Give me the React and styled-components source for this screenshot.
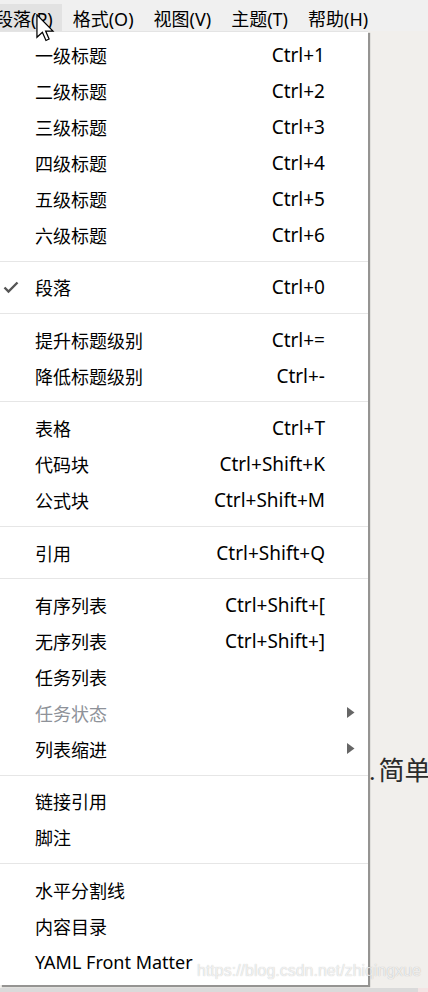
import React from 'react';
import styled, { createGlobalStyle } from 'styled-components';

const GlobalStyle = createGlobalStyle`
  html, body {
    margin: 0;
    padding: 0;
    background: #f1efec;
    overflow: hidden;
  }
  body {
    font-family: "Noto Sans", "Noto Sans CJK SC", sans-serif;
    color: #000;
  }
`;

const Page = styled.div`
  position: relative;
  width: 428px;
  height: 992px;
  overflow: hidden;
  display: flex;
  flex-direction: column;
`;

const MenuBar = styled.div`
  height: 31px;
  flex-shrink: 0;
  display: flex;
  align-items: stretch;
  background: #f0f0f0;
  margin-left: -14px;
  padding-top: 4px;
  box-sizing: border-box;
`;

const MenuBarItem = styled.div`
  display: flex;
  align-items: center;
  padding: 0 9px 0 9px;
  margin-right: 2px;
  font-size: 18px;
  white-space: nowrap;
  background: ${(p) => (p.$active ? '#e2e2e2' : 'transparent')};
`;

const Editor = styled.div`
  flex: 1;
  background: #f1efec;
  padding: 719px 0 0 353px;
  box-sizing: border-box;
`;

const Heading = styled.div`
  font-family: "Liberation Serif", "Noto Sans CJK SC", serif;
  font-size: 26px;
  color: #2b2b2b;
  white-space: nowrap;
`;

const HeadingNum = styled.span`
  letter-spacing: 3px;
`;

const BottomStrip = styled.div`
  height: 4px;
  flex-shrink: 0;
  display: flex;
`;

const StripBar = styled.div`
  flex: 1;
  background: #dadada;
`;

const StripEnd = styled.div`
  width: 10px;
  background: #f3e4e4;
`;

const Dropdown = styled.div`
  position: absolute;
  top: 31px;
  left: 0;
  width: 368px;
  background: #fff;
  border-top: 1px solid #e4e4e4;
  padding: 5px 0 5px;
  box-sizing: border-box;
  box-shadow: 2px 2px 1px rgba(0, 0, 0, 0.38);
`;

const Row = styled.div`
  display: grid;
  grid-template-columns: 35px 1fr auto 43px;
  align-items: center;
  height: 36px;
  font-size: 18px;
  color: ${(p) => (p.$disabled ? '#8e9299' : '#000')};
`;

const CheckCell = styled.div`
  display: flex;
  align-items: center;
  padding-left: 3px;
`;

const Label = styled.div`
  white-space: nowrap;
`;

const Shortcut = styled.div`
  white-space: nowrap;
  font-size: 19px;
`;

const ArrowCell = styled.div`
  display: flex;
  align-items: center;
  padding-left: 22px;
`;

const Separator = styled.div`
  height: 16.4px;
  display: flex;
  align-items: center;

  &::after {
    content: '';
    flex: 1;
    height: 1px;
    background: #e6e6e6;
  }
`;

const Watermark = styled.div`
  position: absolute;
  left: 197px;
  top: 962px;
  font-family: "Liberation Sans", Arial, sans-serif;
  font-size: 16px;
  line-height: 18px;
  color: rgba(255, 255, 255, 0.75);
  text-shadow: 0 0 1px rgba(0, 0, 0, 0.28);
  white-space: nowrap;
`;

const Cursor = styled.svg`
  position: absolute;
  left: 36px;
  top: 14px;
`;

const CheckIcon = () => (
  <svg width="16" height="13" viewBox="0 0 16 13">
    <polyline points="1.5,6.5 5.5,10.5 14.5,1.5" fill="none" stroke="#555" strokeWidth="2.4" />
  </svg>
);

const ArrowIcon = () => (
  <svg width="8" height="11" viewBox="0 0 8 11">
    <polygon points="0,0 7.5,5.5 0,11" fill="#666" />
  </svg>
);

const menuGroups = [
  [
    { label: '一级标题', key: 'Ctrl+1' },
    { label: '二级标题', key: 'Ctrl+2' },
    { label: '三级标题', key: 'Ctrl+3' },
    { label: '四级标题', key: 'Ctrl+4' },
    { label: '五级标题', key: 'Ctrl+5' },
    { label: '六级标题', key: 'Ctrl+6' },
  ],
  [{ label: '段落', key: 'Ctrl+0', checked: true }],
  [
    { label: '提升标题级别', key: 'Ctrl+=' },
    { label: '降低标题级别', key: 'Ctrl+-' },
  ],
  [
    { label: '表格', key: 'Ctrl+T' },
    { label: '代码块', key: 'Ctrl+Shift+K' },
    { label: '公式块', key: 'Ctrl+Shift+M' },
  ],
  [{ label: '引用', key: 'Ctrl+Shift+Q' }],
  [
    { label: '有序列表', key: 'Ctrl+Shift+[' },
    { label: '无序列表', key: 'Ctrl+Shift+]' },
    { label: '任务列表' },
    { label: '任务状态', disabled: true, submenu: true },
    { label: '列表缩进', submenu: true },
  ],
  [
    { label: '链接引用' },
    { label: '脚注' },
  ],
  [
    { label: '水平分割线' },
    { label: '内容目录' },
    { label: 'YAML Front Matter' },
  ],
];

const topMenus = ['段落(P)', '格式(O)', '视图(V)', '主题(T)', '帮助(H)'];

export default function App() {
  return (
    <>
      <GlobalStyle />
      <Page>
        <MenuBar>
          {topMenus.map((m, i) => (
            <MenuBarItem key={m} $active={i === 0}>{m}</MenuBarItem>
          ))}
        </MenuBar>
        <Editor>
          <Heading>
            <HeadingNum>1.</HeadingNum>简单使用
          </Heading>
        </Editor>
        <BottomStrip>
          <StripBar />
          <StripEnd />
        </BottomStrip>

        <Dropdown>
          {menuGroups.map((group, gi) => (
            <React.Fragment key={gi}>
              {gi > 0 && <Separator />}
              {group.map((item) => (
                <Row key={item.label} $disabled={item.disabled}>
                  <CheckCell>{item.checked && <CheckIcon />}</CheckCell>
                  <Label>{item.label}</Label>
                  <Shortcut>{item.key || ''}</Shortcut>
                  <ArrowCell>{item.submenu && <ArrowIcon />}</ArrowCell>
                </Row>
              ))}
            </React.Fragment>
          ))}
        </Dropdown>

        <Cursor width="19" height="28" viewBox="0 0 12 18">
          <path
            d="M0.5 0.5 L0.5 15 L4 11.8 L6.3 17 L8.3 16.1 L6.1 11 L10.8 11 Z"
            fill="#fff"
            stroke="#000"
            strokeWidth="0.8"
            strokeLinejoin="miter"
          />
        </Cursor>
        <Watermark>https://blog.csdn.net/zhiqingxue</Watermark>
      </Page>
    </>
  );
}
